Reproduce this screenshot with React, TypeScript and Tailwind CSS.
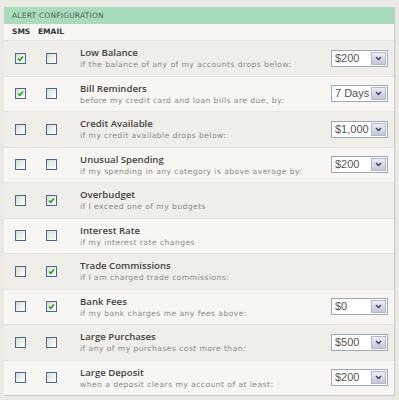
import React from "react";

type Alert = {
  title: string;
  desc: string;
  sms: boolean;
  email: boolean;
  value?: string;
};

const alerts: Alert[] = [
  { title: "Low Balance", desc: "if the balance of any of my accounts drops below:", sms: true, email: false, value: "$200" },
  { title: "Bill Reminders", desc: "before my credit card and loan bills are due, by:", sms: true, email: false, value: "7 Days" },
  { title: "Credit Available", desc: "if my credit available drops below:", sms: false, email: false, value: "$1,000" },
  { title: "Unusual Spending", desc: "if my spending in any category is above average by:", sms: false, email: false, value: "$200" },
  { title: "Overbudget", desc: "if I exceed one of my budgets", sms: false, email: true },
  { title: "Interest Rate", desc: "if my interest rate changes", sms: false, email: false },
  { title: "Trade Commissions", desc: "if I am charged trade commissions:", sms: false, email: true },
  { title: "Bank Fees", desc: "if my bank charges me any fees above:", sms: false, email: true, value: "$0" },
  { title: "Large Purchases", desc: "if any of my purchases cost more than:", sms: false, email: false, value: "$500" },
  { title: "Large Deposit", desc: "when a deposit clears my account of at least:", sms: false, email: false, value: "$200" },
];

const Check = ({ on }: { on: boolean }) => (
  <div className="w-[11px] h-[11px] border border-[#4a6a8c] bg-gradient-to-br from-[#dcdcd6] to-white flex items-center justify-center">
    {on && (
      <svg width="7" height="7" viewBox="0 0 7 7">
        <path d="M1 3.5 L2.8 5.3 L6 1.5" fill="none" stroke="#21a121" strokeWidth="1.6" />
      </svg>
    )}
  </div>
);

const Select = ({ value }: { value: string }) => (
  <div className="w-[57px] h-[17px] border border-[#9aa9b8] bg-white flex items-stretch">
    <div className="flex-1 pl-[3px] text-[11px] leading-[15px] text-[#555] font-['Liberation_Sans',sans-serif]">
      {value}
    </div>
    <div className="w-[15px] m-[1px] bg-gradient-to-b from-[#eceef6] to-[#c4c7da] border border-[#b3b7cc] flex items-center justify-center">
      <svg width="7" height="5" viewBox="0 0 7 5">
        <path d="M1 1 L3.5 3.5 L6 1" fill="none" stroke="#3d4255" strokeWidth="1.5" />
      </svg>
    </div>
  </div>
);

export default function App() {
  return (
    <div className="w-[399px] h-[400px] bg-[#ebe9e4] pt-[7px] pl-[4px] pr-[5px] overflow-hidden font-['DejaVu_Sans',Verdana,sans-serif]">
      <div className="bg-[#f7f6f2] shadow-[1px_1px_1px_rgba(0,0,0,0.12)]">
        <div className="h-[17px] bg-[#a8dcbc] pl-[8px] flex items-center text-[7.5px] text-[#55615a] tracking-[0.2px]">
          ALERT CONFIGURATION
        </div>
        <div className="h-[16px] flex items-center text-[7.5px] font-bold text-[#333]">
          <span className="pl-[8px] w-[34px]">SMS</span>
          <span>EMAIL</span>
        </div>
        {alerts.map((a, i) => (
          <div
            key={a.title}
            className={`h-[35.5px] flex items-center border-t border-[#e6e4de] ${
              i % 2 === 0 ? "bg-[#efeee9]" : "bg-[#f7f6f2]"
            }`}
          >
            <div className="w-[42px] pl-[11px] flex">
              <Check on={a.sms} />
            </div>
            <div className="w-[34px] flex">
              <Check on={a.email} />
            </div>
            <div className="flex-1 flex flex-col">
              <div className="text-[9.6px] leading-[13px] font-semibold text-[#444] font-['Open_Sans',sans-serif]">
                {a.title}
              </div>
              <div className="text-[7.6px] leading-[11px] tracking-[0.45px] text-[#8a8a8a]">
                {a.desc}
              </div>
            </div>
            {a.value && (
              <div className="pr-[6px]">
                <Select value={a.value} />
              </div>
            )}
          </div>
        ))}
      </div>
    </div>
  );
}
